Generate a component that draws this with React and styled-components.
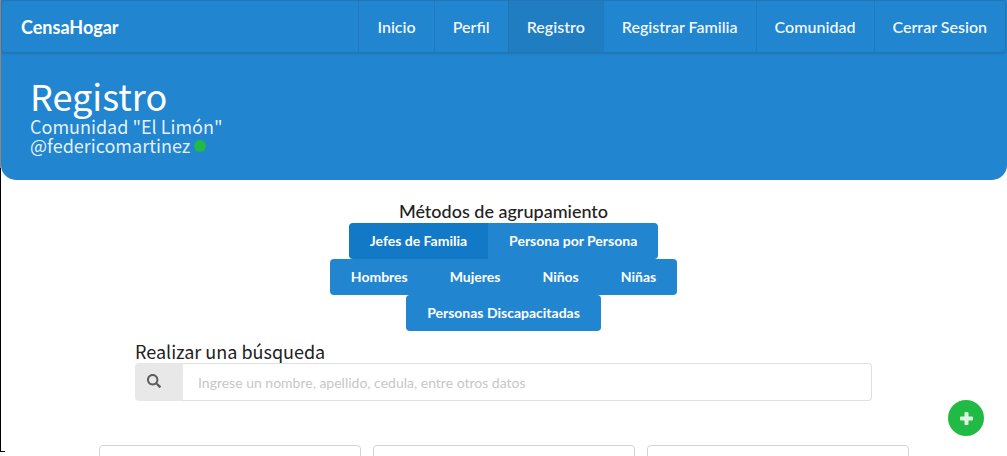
import React from 'react';
import styled, { createGlobalStyle } from 'styled-components';

const blue = '#2185d0';
const lato = 'Lato, "Liberation Sans", sans-serif';
const source = '"Noto Sans CJK SC", "Noto Sans", sans-serif';

const GlobalStyle = createGlobalStyle`
  *, *::before, *::after { box-sizing: border-box; }
  html, body, #root { height: 100%; }
  body { margin: 0; background: #fff; color: #212121; font-family: ${lato}; font-size: 14px; overflow: hidden; }
  h1, h2, p { margin: 0; }
`;

const Page = styled.div`
  position: relative;
  height: 100%;
  overflow: hidden;
`;

const Edge = styled.div`
  position: absolute;
  inset: 0 auto 4px 0;
  width: 5px;
  border-left: 1px solid #000;
  border-bottom: 1px solid #000;
  &::before {
    content: '';
    position: absolute;
    left: -1px;
    top: 0;
    width: 1px;
    height: 168px;
    background: #93857c;
  }
`;

const Banner = styled.header`
  background: ${blue};
  margin-left: 1px;
  border-radius: 0 0 15px 15px;
`;

const Nav = styled.nav`
  display: flex;
  height: 53px;
  margin-right: 1px;
  border: 1px solid rgba(34, 36, 38, 0.15);
  border-radius: 4px;
  box-shadow: 0 1px 2px 0 rgba(34, 36, 38, 0.15);
`;

const Brand = styled.a`
  display: flex;
  align-items: center;
  margin-right: auto;
  padding: 0 19px;
  color: #fff;
  font-size: 18px;
  font-weight: 700;
  text-decoration: none;
`;

const NavItem = styled.a`
  display: flex;
  align-items: center;
  padding: 0 18px;
  border-left: 1px solid rgba(34, 36, 38, 0.1);
  background: ${(p) => (p.$active ? 'rgba(34, 36, 38, 0.08)' : 'transparent')};
  color: rgba(255, 255, 255, 0.95);
  font-size: 16px;
  font-weight: 600;
  text-decoration: none;
`;

const Intro = styled.div`
  padding: 24px 29px 25px;
  color: #fff;
  font-family: ${source};
`;

const Title = styled.h1`
  margin-bottom: 4px;
  font-size: 36px;
  font-weight: 400;
  line-height: 36px;
`;

const Detail = styled.p`
  display: flex;
  align-items: center;
  gap: 4px;
  color: rgba(255, 255, 255, 0.9);
  font-size: 18px;
  font-weight: 400;
  line-height: 19px;
`;

const Status = styled.span`
  width: 12px;
  height: 12px;
  border-radius: 50%;
  background: #21ba45;
`;

const Grouping = styled.section`
  display: flex;
  flex-direction: column;
  align-items: center;
  padding-top: 20px;
`;

const GroupingTitle = styled.h2`
  font-size: 18px;
  font-weight: 500;
  line-height: 23px;
`;

const ButtonGroup = styled.div`
  display: flex;
  overflow: hidden;
  border-radius: 4px;
`;

const GroupButton = styled.button`
  height: 36px;
  padding: 0 21px 2px;
  border: 0;
  background: ${(p) => (p.$active ? '#1279c6' : blue)};
  color: #fff;
  font: 700 14px ${lato};
`;

const Search = styled.form`
  width: 100%;
  max-width: 737px;
  margin: 10px auto 0;
`;

const SearchLabel = styled.label`
  display: block;
  margin-bottom: 2px;
  font-family: ${source};
  font-size: 18px;
  font-weight: 400;
  line-height: 20px;
`;

const SearchBox = styled.div`
  display: flex;
  height: 38px;
`;

const SearchIcon = styled.span`
  display: flex;
  align-items: center;
  width: 48px;
  padding: 0 0 2px 12px;
  border-radius: 4px 0 0 4px;
  background: #e8e8e8;
  color: #5c5c5c;
`;

const SearchInput = styled.input`
  flex: 1;
  min-width: 0;
  padding: 0 15px;
  border: 1px solid #dedfdf;
  border-left: 0;
  border-radius: 0 4px 4px 0;
  background: #fff;
  font: 400 14px ${lato};
  &::placeholder { color: #c7c7c7; opacity: 1; }
`;

const Cards = styled.div`
  display: grid;
  grid-template-columns: repeat(3, 1fr);
  gap: 12px;
  max-width: 810px;
  margin: 44px auto 0;
`;

const Card = styled.article`
  height: 160px;
  border: 1px solid #d4d4d5;
  border-radius: 4px;
`;

const AddButton = styled.button`
  position: fixed;
  right: 23px;
  bottom: 20px;
  display: grid;
  place-items: center;
  width: 36px;
  height: 36px;
  padding: 0;
  border: 0;
  border-radius: 50%;
  background: #21ba45;
  color: rgba(255, 255, 255, 0.85);
`;

const links = ['Inicio', 'Perfil', 'Registro', 'Registrar Familia', 'Comunidad', 'Cerrar Sesion'];
const groups = [
  ['Jefes de Familia', 'Persona por Persona'],
  ['Hombres', 'Mujeres', 'Niños', 'Niñas'],
  ['Personas Discapacitadas'],
];

export default function App() {
  return (
    <Page>
      <GlobalStyle />
      <Banner>
        <Nav>
          <Brand href="#">CensaHogar</Brand>
          {links.map((name) => (
            <NavItem key={name} href="#" $active={name === 'Registro'}>{name}</NavItem>
          ))}
        </Nav>
        <Intro>
          <Title>Registro</Title>
          <Detail>Comunidad "El Limón"</Detail>
          <Detail>@federicomartinez <Status /></Detail>
        </Intro>
      </Banner>
      <main>
        <Grouping>
          <GroupingTitle>Métodos de agrupamiento</GroupingTitle>
          {groups.map((names) => (
            <ButtonGroup key={names[0]}>
              {names.map((name) => (
                <GroupButton key={name} type="button" $active={name === 'Jefes de Familia'}>{name}</GroupButton>
              ))}
            </ButtonGroup>
          ))}
        </Grouping>
        <Search>
          <SearchLabel htmlFor="search">Realizar una búsqueda</SearchLabel>
          <SearchBox>
            <SearchIcon>
              <svg width="14" height="14" viewBox="0 0 512 512" fill="currentColor" aria-hidden="true">
                <path d="M505 442.700 405.300 343c-4.500-4.500-10.600-7-17-7H372c27.600-35.300 44-79.700 44-128C416 93.100 322.900 0 208 0S0 93.100 0 208s93.100 208 208 208c48.300 0 92.700-16.400 128-44v16.300c0 6.400 2.500 12.500 7 17l99.700 99.700c9.400 9.400 24.600 9.400 33.900 0l28.300-28.300c9.400-9.400 9.400-24.600.1-34zM208 346c-76 0-138-62-138-138 0-76 62-138 138-138 76 0 138 62 138 138 0 76-62 138-138 138z" />
              </svg>
            </SearchIcon>
            <SearchInput id="search" type="text" placeholder="Ingrese un nombre, apellido, cedula, entre otros datos" />
          </SearchBox>
        </Search>
        <Cards>
          <Card />
          <Card />
          <Card />
        </Cards>
      </main>
      <AddButton type="button" aria-label="Agregar">
        <svg width="13" height="13" viewBox="0 0 13 13" fill="currentColor" aria-hidden="true">
          <path d="M5.500 0h2q1 0 1 1v3.500H12q1 0 1 1v2q0 1-1 1H8.500V12q0 1-1 1h-2q-1 0-1-1V8.500H1q-1 0-1-1v-2q0-1 1-1h3.500V1q0-1 1-1z" />
        </svg>
      </AddButton>
      <Edge />
    </Page>
  );
}
